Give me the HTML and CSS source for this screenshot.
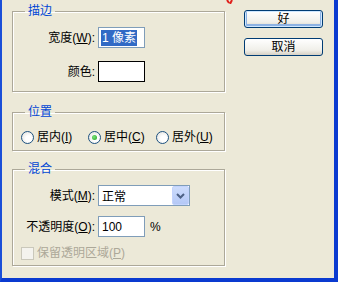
FILE: index.html
```html
<!DOCTYPE html>
<html lang="zh-CN">
<head>
  <meta charset="UTF-8">
  <title>描边</title>
  <link rel="stylesheet" href="styles.css">
</head>
<body>
  <div class="window">
    <svg class="red-mark" width="8" height="4" viewBox="0 0 8 4"><path d="M1 0 L3 3 M6 0 L4 4" stroke="#e0201b" stroke-width="2" fill="none"/></svg>

    <div class="groups">
      <fieldset class="group group-stroke">
        <legend>描边</legend>
        <div class="rows">
          <label class="lbl">宽度(<u>W</u>):</label>
          <div class="field"><span class="sel">1 像素</span></div>
          <label class="lbl">颜色:</label>
          <div class="swatch"></div>
        </div>
      </fieldset>

      <fieldset class="group group-pos">
        <legend>位置</legend>
        <div class="radios">
          <label class="opt"><span class="radio"></span><span>居内(<u>I</u>)</span></label>
          <label class="opt"><span class="radio on"></span><span>居中(<u>C</u>)</span></label>
          <label class="opt"><span class="radio"></span><span>居外(<u>U</u>)</span></label>
        </div>
      </fieldset>

      <fieldset class="group group-blend">
        <legend>混合</legend>
        <div class="rows">
          <label class="lbl">模式(<u>M</u>):</label>
          <div class="select">
            <span class="select-text">正常</span>
            <span class="drop">
              <svg width="9" height="6" viewBox="0 0 9 6"><path d="M1 1 L4.5 4.5 L8 1" stroke="#4d6185" stroke-width="2" fill="none"/></svg>
            </span>
          </div>
          <label class="lbl">不透明度(<u>O</u>):</label>
          <div class="with-unit"><div class="field num">100</div><span class="unit">%</span></div>
        </div>
        <label class="check disabled"><span class="box"></span><span>保留透明区域(<u>P</u>)</span></label>
      </fieldset>
    </div>

    <div class="buttons">
      <button class="btn default">好</button>
      <button class="btn">取消</button>
    </div>
  </div>
</body>
</html>
```
FILE: styles.css
```css
body { margin: 0; background: #ece9d8; font-family: "Liberation Sans", "Noto Sans CJK SC", sans-serif; font-size: 12px; color: #000; }

.window { width: 338px; height: 282px; box-sizing: border-box; position: relative; display: flex; gap: 19px; padding: 4px 0 0 10px; background: #ece9d8; border-left: 2px solid #1b4fd8; border-right: 4px solid #0a3ad0; border-bottom: 4px solid #0a3ad0; }
.red-mark { position: absolute; left: 224px; top: 0; }

.groups { display: flex; flex-direction: column; width: 213px; }
.group { margin: 0; padding: 0; width: 213px; box-sizing: border-box; border: 1px solid #aca899; box-shadow: 1px 1px 0 #fff, inset 1px 1px 0 #fff; }
.group legend { margin-left: 12px; padding: 0 3px; color: #0046d5; line-height: 14px; }
.group-stroke { height: 88px; }
.group-pos { height: 46px; margin-top: 13px; }
.group-blend { height: 104px; margin-top: 11px; }

.rows { display: grid; grid-template-columns: 82px auto; column-gap: 3px; align-items: center; }
.group-stroke .rows { padding-top: 9px; row-gap: 13px; }
.group-blend .rows { padding-top: 9px; row-gap: 10px; }
.lbl { text-align: right; line-height: 14px; }

.field { width: 47px; height: 21px; box-sizing: border-box; border: 1px solid #7f9db9; background: #fff; display: flex; align-items: center; padding-left: 2px; line-height: 14px; }
.sel { background: #316ac5; color: #fff; padding: 1px 1px; }
.swatch { width: 47px; height: 21px; box-sizing: border-box; border: 1px solid #000; background: #fff; }

.radios { display: grid; grid-template-columns: 67px 68px auto; padding: 11px 0 0 8px; }
.opt { display: flex; align-items: center; gap: 3px; line-height: 14px; }
.radio { width: 13px; height: 13px; box-sizing: border-box; border-radius: 50%; border: 1px solid #1c5180; background: radial-gradient(circle at 60% 60%, #ffffff 30%, #dcdcd7 100%); display: flex; align-items: center; justify-content: center; }
.radio.on::after { content: ""; width: 5px; height: 5px; border-radius: 50%; background: radial-gradient(circle at 40% 40%, #7be37b, #21a121); }

.select { width: 92px; height: 21px; box-sizing: border-box; border: 1px solid #7f9db9; background: #fff; display: flex; align-items: center; justify-content: space-between; padding: 0 0 0 3px; }
.drop { width: 17px; height: 19px; box-sizing: border-box; border-radius: 2px; background: linear-gradient(#cddcfc, #b4c8f6); border: 1px solid #c3d3fd; display: flex; align-items: center; justify-content: center; }
.with-unit { display: flex; align-items: center; gap: 5px; }
.num { padding-left: 3px; }

.check { display: flex; align-items: center; gap: 3px; margin: 9px 0 0 8px; line-height: 14px; }
.check .box { width: 13px; height: 13px; box-sizing: border-box; border: 1px solid #cac8bb; background: #f4f3ee; }
.check.disabled { color: #aca899; }

.buttons { display: flex; flex-direction: column; gap: 10px; padding-top: 6px; }
.btn { width: 79px; height: 18px; box-sizing: border-box; padding: 0; border: 1px solid #003c74; border-radius: 3px; background: linear-gradient(#ffffff, #f0efe9 70%, #d6d0c5); font: inherit; color: #000; line-height: 14px; }
.btn.default { box-shadow: inset 0 0 0 1px #cee7ff, inset 0 -1px 0 2px #8db2e3; }
```
